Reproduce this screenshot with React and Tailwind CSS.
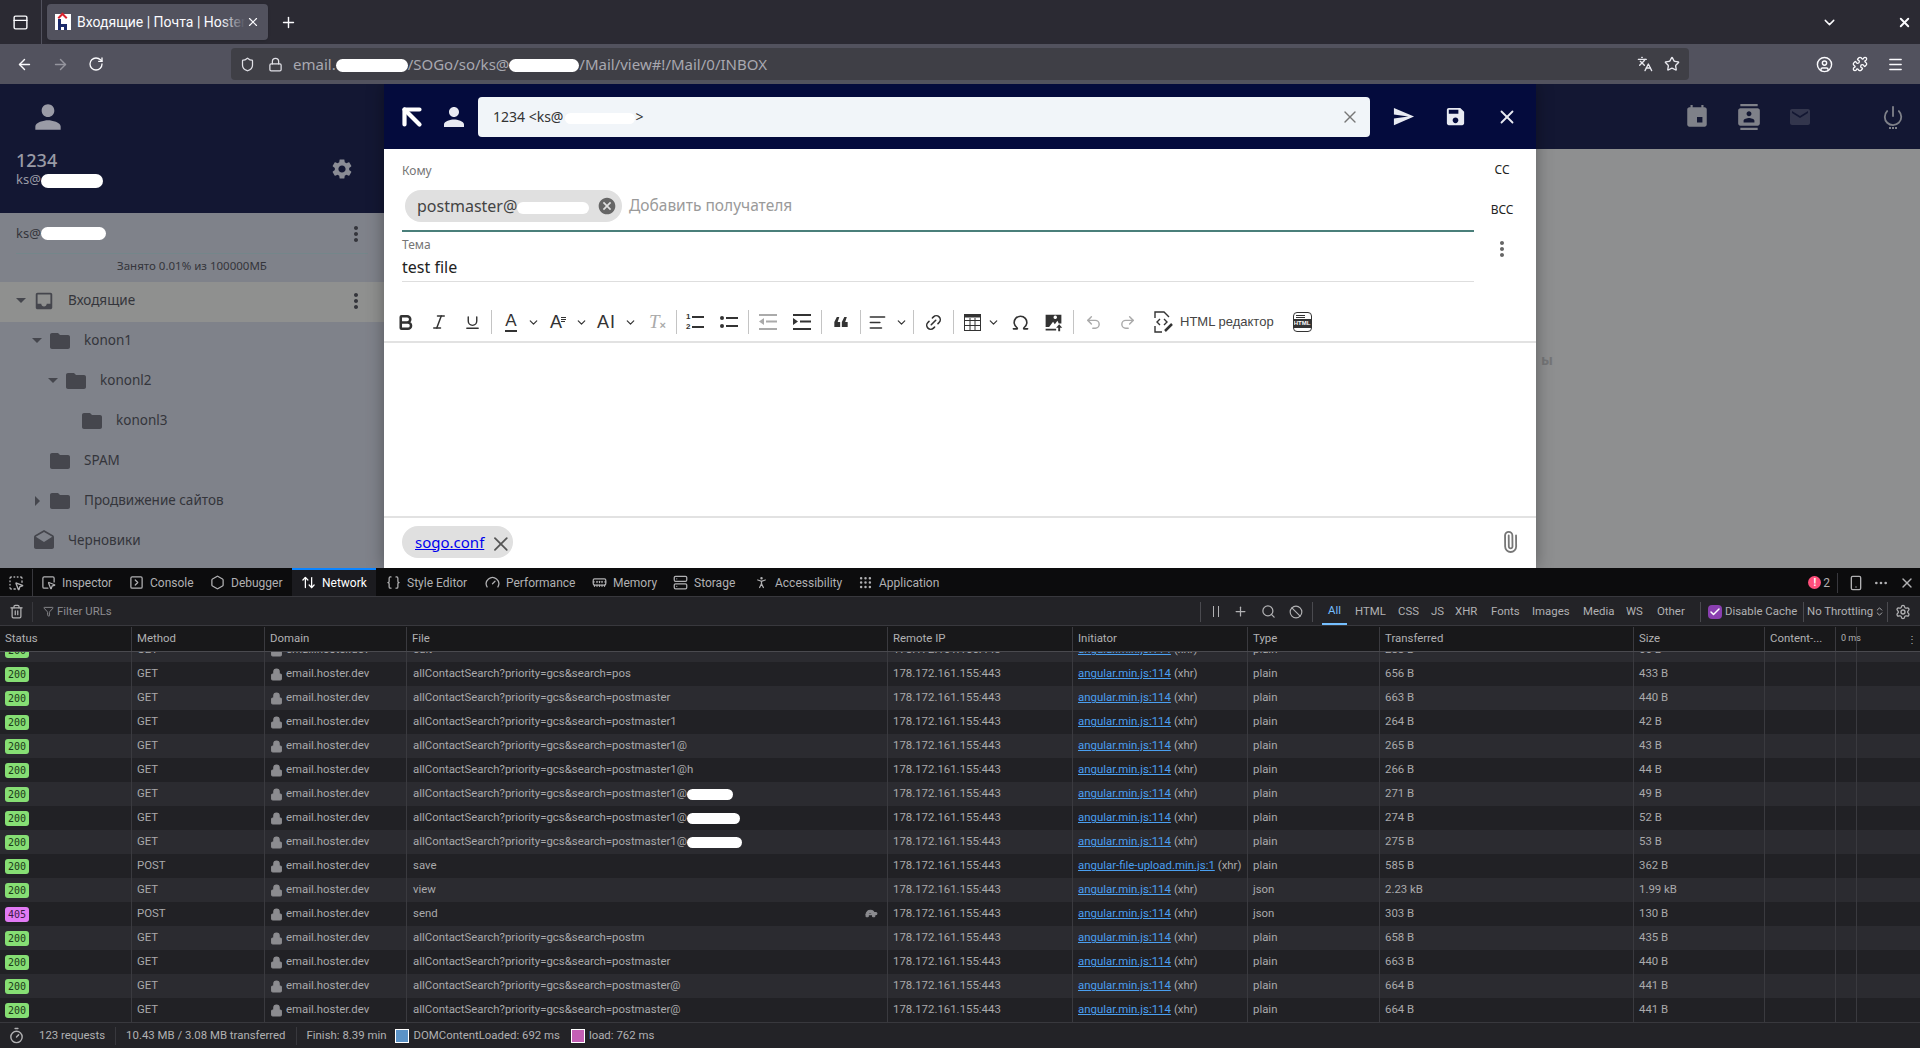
import {
  ArrowUpLeft, X, Plus, ChevronDown, ArrowLeft, ArrowRight, RotateCw, Shield, Lock, Languages, Star,
  CircleUser, Puzzle, Menu, Power, Paperclip, Bold, Italic, Underline, Link2,
  Omega, Undo2, Redo2, Search, Ban, Settings, Trash2, Filter, Timer, Check, AlignLeft,
  MousePointerSquareDashed, Inspect, SquareChevronRight, ArrowUpDown, Braces, Gauge, MemoryStick,
  Server, PersonStanding, Grip, Smartphone, Ellipsis, ChevronsUpDown, Turtle, PanelTop, Hexagon,
} from "lucide-react";

const ui = "font-['Noto_Sans','Liberation_Sans',sans-serif]";
const dt = "font-['Roboto','Liberation_Sans',sans-serif]";

const Md = ({ d, className = "", size = 24 }) => (
  <svg width={size} height={size} viewBox="0 0 24 24" fill="currentColor" className={`shrink-0 ${className}`}>
    <path d={d} />
  </svg>
);

const paths = {
  person: "M12 12c2.21 0 4-1.79 4-4s-1.79-4-4-4-4 1.79-4 4 1.79 4 4 4zm0 2c-2.67 0-8 1.34-8 4v2h16v-2c0-2.66-5.33-4-8-4z",
  send: "M2.01 21L23 12 2.01 3 2 10l15 2-15 2z",
  save: "M17 3H5c-1.11 0-2 .9-2 2v14c0 1.1.89 2 2 2h14c1.1 0 2-.9 2-2V7l-4-4zm-5 16c-1.66 0-3-1.34-3-3s1.34-3 3-3 3 1.34 3 3-1.34 3-3 3zm3-10H5V5h10v4z",
  gear: "M19.14 12.94c.04-.3.06-.61.06-.94 0-.32-.02-.64-.07-.94l2.03-1.58c.18-.14.23-.41.12-.61l-1.92-3.32c-.12-.22-.37-.29-.59-.22l-2.39.96c-.5-.38-1.03-.7-1.62-.94l-.36-2.54c-.04-.24-.24-.41-.48-.41h-3.84c-.24 0-.43.17-.47.41l-.36 2.54c-.59.24-1.13.57-1.62.94l-2.39-.96c-.22-.08-.47 0-.59.22L2.74 8.87c-.12.21-.08.47.12.61l2.03 1.58c-.05.3-.09.63-.09.94s.02.64.07.94l-2.03 1.58c-.18.14-.23.41-.12.61l1.92 3.32c.12.22.37.29.59.22l2.39-.96c.5.38 1.03.7 1.62.94l.36 2.54c.05.24.24.41.48.41h3.84c.24 0 .44-.17.47-.41l.36-2.54c.59-.24 1.13-.56 1.62-.94l2.39.96c.22.08.47 0 .59-.22l1.92-3.32c.12-.22.07-.47-.12-.61l-2.01-1.58zM12 15.6c-1.98 0-3.6-1.62-3.6-3.6s1.62-3.6 3.6-3.6 3.6 1.62 3.6 3.6-1.62 3.6-3.6 3.6z",
  contacts: "M20 0H4v2h16V0zM4 24h16v-2H4v2zM20 4H4c-1.1 0-2 .9-2 2v12c0 1.1.9 2 2 2h16c1.1 0 2-.9 2-2V6c0-1.1-.9-2-2-2zm-8 2.75c1.24 0 2.25 1.01 2.25 2.25s-1.01 2.25-2.25 2.25S9.75 10.24 9.75 9 10.76 6.75 12 6.75zM17 17H7v-1.5c0-1.67 3.33-2.5 5-2.5s5 .83 5 2.5V17z",
  mail: "M20 4H4c-1.1 0-1.99.9-1.99 2L2 18c0 1.1.9 2 2 2h16c1.1 0 2-.9 2-2V6c0-1.1-.9-2-2-2zm0 4l-8 5-8-5V6l8 5 8-5v2z",
  calendar: "M19 3h-1V1h-2v2H8V1H6v2H5C3.9 3 3 3.9 3 5v14c0 1.1.9 2 2 2h14c1.1 0 2-.9 2-2V5c0-1.1-.9-2-2-2zM17 12v5h-5v-5h5z",
  inbox: "M19 3H4.99c-1.11 0-1.98.89-1.98 2L3 19c0 1.1.88 2 1.99 2H19c1.1 0 2-.9 2-2V5c0-1.11-.9-2-2-2zm0 12h-4c0 1.66-1.35 3-3 3s-3-1.34-3-3H4.99V5H19v10z",
  folder: "M10 4H4c-1.1 0-1.99.9-1.99 2L2 18c0 1.1.9 2 2 2h16c1.1 0 2-.9 2-2V8c0-1.1-.9-2-2-2h-8l-2-2z",
  drafts: "M21.99 8c0-.72-.37-1.35-.94-1.7L12 1 2.95 6.3C2.38 6.65 2 7.28 2 8v10c0 1.1.9 2 2 2h16c1.1 0 2-.9 2-2l-.01-10zM12 13L3.74 7.84 12 3l8.26 4.84L12 13z",
  dots: "M12 8c1.1 0 2-.9 2-2s-.9-2-2-2-2 .9-2 2 .9 2 2 2zm0 2c-1.1 0-2 .9-2 2s.9 2 2 2 2-.9 2-2-.9-2-2-2zm0 6c-1.1 0-2 .9-2 2s.9 2 2 2 2-.9 2-2-.9-2-2-2z",
  cancel: "M12 2C6.47 2 2 6.47 2 12s4.47 10 10 10 10-4.47 10-10S17.53 2 12 2zm5 13.59L15.59 17 12 13.41 8.41 17 7 15.59 10.59 12 7 8.41 8.41 7 12 10.59 15.59 7 17 8.41 13.41 12 17 15.59z",
  quote: "M5 18l2-6H4V6h7v6l-3 6H5zm9 0l2-6h-3V6h7v6l-3 6h-3z",
  imageUp: "M3 3h18v10h-3l-1.5-3-3 4-2-3L7 17H3V3zm13 3a2 2 0 1 0 0 .01zM7 19h8v2H3v-2h4zm11.5-5l3.5 4h-2.4v4h-2.2v-4H15l3.5-4z",
};

const Blob = ({ className = "" }) => <span className={`inline-block rounded-full bg-white align-middle ${className}`} />;

function BrowserChrome() {
  return (
    <div className={`${ui} text-[#fbfbfe]`}>
      <div className="flex h-[44px] items-center bg-[#2b2a33]">
        <div className="flex h-full w-[42px] items-center justify-center border-r border-[#52525e]">
          <PanelTop size={17} />
        </div>
        <div className="relative ml-[5px] flex h-[36px] w-[221px] items-center rounded bg-[#52525e] pl-[8px] shadow">
          <div className="relative h-[16px] w-[16px] shrink-0 bg-white">
            <div className="absolute left-[3px] top-[5px] h-[11px] w-[3px] bg-[#1b2a6b]" />
            <div className="absolute bottom-0 left-[3px] h-[6px] w-[9px] border-t-[3px] border-r-[3px] border-[#1b2a6b]" />
            <div className="absolute left-[4px] top-0 h-[7px] w-[7px] rotate-45 border-l-2 border-t-2 border-[#d9232e]" />
          </div>
          <div className={`relative ml-[6px] w-[168px] overflow-hidden whitespace-nowrap text-[14px] ${dt}`}>
            Входящие | Почта | Hoster.dev
            <div className="absolute inset-y-0 right-0 w-[24px] bg-gradient-to-r from-transparent to-[#52525e]" />
          </div>
          <X size={14} className="ml-[1px] shrink-0" />
        </div>
        <Plus size={17} className="ml-[12px]" />
        <div className="flex-1" />
        <ChevronDown size={17} className="mr-[59px]" />
        <X size={15} strokeWidth={3} className="mr-[8px]" />
      </div>
      <div className="flex h-[40px] items-center bg-[#52525e]">
        <ArrowLeft size={17} className="ml-[16px]" />
        <ArrowRight size={17} className="ml-[19px] opacity-40" />
        <RotateCw size={16} className="ml-[19px]" />
        <div className="ml-[127px] flex h-[32px] w-[1458px] items-center rounded bg-[#3f3f46] text-[15px] text-[#a8a8b0]">
          <Shield size={15} className="ml-[9px] text-[#e0e0e6]" />
          <Lock size={15} className="ml-[13px] text-[#e0e0e6]" />
          <span className="ml-[10px] whitespace-nowrap">
            email.<Blob className="h-[13px] w-[72px]" />/SOGo/so/ks@<Blob className="h-[13px] w-[70px]" />/Mail/view#!/Mail/0/INBOX
          </span>
          <div className="flex-1" />
          <Languages size={16} className="mr-[11px] text-[#e8e8ee]" />
          <Star size={16} className="mr-[9px] text-[#e8e8ee]" />
        </div>
        <CircleUser size={17} className="ml-[127px]" />
        <Puzzle size={16} className="ml-[19px]" />
        <Menu size={17} className="ml-[19px]" />
      </div>
    </div>
  );
}

const folders = [
  { name: "konon1", tri: "down", pad: "pl-[30px]", icon: "folder" },
  { name: "kononl2", tri: "down", pad: "pl-[46px]", icon: "folder" },
  { name: "kononl3", pad: "pl-[62px]", icon: "folder" },
  { name: "SPAM", pad: "pl-[30px]", icon: "folder" },
  { name: "Продвижение сайтов", tri: "right", pad: "pl-[30px]", icon: "folder" },
  { name: "Черновики", pad: "pl-[14px]", icon: "drafts" },
];

const Tri = ({ dir }) => (
  <span className="flex w-[14px] shrink-0 items-center justify-center">
    {dir === "down" && <span className="h-0 w-0 border-x-[5px] border-t-[5px] border-x-transparent border-t-[#45464d]" />}
    {dir === "right" && <span className="h-0 w-0 border-y-[5px] border-l-[5px] border-y-transparent border-l-[#45464d]" />}
  </span>
);

function Sidebar() {
  return (
    <div className={`flex h-full w-[384px] shrink-0 flex-col overflow-hidden bg-[#7f828a] ${ui} text-[#34353b]`}>
      <div className="relative h-[129px] shrink-0 bg-[#131733] text-[#9a9ba6]">
        <Md d={paths.person} size={38} className="ml-[29px] mt-[14px]" />
        <div className="ml-[16px] mt-[12px] text-[18px] font-medium leading-[24px]">1234</div>
        <div className="ml-[16px] -mt-[1px] text-[13px] leading-[16px]">
          ks@<Blob className="h-[14px] w-[62px]" />
        </div>
        <Md d={paths.gear} size={24} className="absolute left-[330px] top-[73px] text-[#8a8c95]" />
      </div>
      <div className="h-[69px] shrink-0">
        <div className="flex h-[40px] items-center pl-[16px] pr-[16px] pt-[1px] text-[13px]">
          ks@<Blob className="h-[13px] w-[65px]" />
          <div className="flex-1" />
          <Md d={paths.dots} size={24} />
        </div>
        <div className="mx-[16px] h-[1px] bg-[#74868a]" />
        <div className="mt-[3px] text-center text-[11.5px] leading-[18px]">Занято 0.01% из 100000МБ</div>
      </div>
      <div className="flex h-[40px] shrink-0 items-center bg-[#8f908f] pb-[3px] pl-[14px] pr-[16px] text-[13.5px]">
        <Tri dir="down" />
        <Md d={paths.inbox} size={22} className="ml-[5px] text-[#45464d]" />
        <span className="ml-[13px]">Входящие</span>
        <div className="flex-1" />
        <Md d={paths.dots} size={24} />
      </div>
      {folders.map((f) => (
        <div key={f.name} className={`flex h-[40px] shrink-0 items-center pb-[3px] text-[13.5px] ${f.pad}`}>
          {f.icon === "folder" && <Tri dir={f.tri} />}
          <Md d={paths[f.icon]} size={24} className={`${f.icon === "folder" ? "ml-[4px]" : "ml-[18px]"} text-[#45464d]`} />
          <span className="ml-[12px]">{f.name}</span>
        </div>
      ))}
    </div>
  );
}

function RightPane() {
  return (
    <div className="relative h-full flex-1">
      <div className="flex h-[65px] items-center justify-end bg-[#131733] pr-[16px] text-[#7f8189]">
        <Md d={paths.calendar} size={26} />
        <Md d={paths.contacts} size={26} className="ml-[26px]" />
        <Md d={paths.mail} size={24} className="ml-[26px] text-[#33364d]" />
        <div className="ml-[70px] flex flex-col items-center">
          <Power size={22} className="text-[#7f8189]" />
          <span className="flex gap-px">
            <span className="h-[2px] w-[2px] bg-[#7f8189]" />
            <span className="h-[2px] w-[2px] bg-[#7f8189]" />
            <span className="h-[2px] w-[2px] bg-[#7f8189]" />
          </span>
        </div>
      </div>
      <div className="h-[419px] bg-[#8e8f90]" />
      <div className={`absolute left-[1157px] top-[265px] text-[14px] font-bold text-[#757678] ${ui}`}>ы</div>
    </div>
  );
}

const Sep = ({ className = "" }) => (
  <div className={`flex h-full shrink-0 items-center justify-center ${className}`}>
    <div className="h-[24px] w-px shrink-0 bg-[#c4c4c4]" />
  </div>
);

const Cell = ({ className = "", children }) => (
  <div className={`flex h-full shrink-0 items-center justify-center text-[#333] ${className}`}>{children}</div>
);

const Chev = () => <ChevronDown size={13} strokeWidth={2.2} className="shrink-0" />;

const NumList = () => (
  <div className="flex w-[18px] flex-col gap-[2px] text-[8px] font-bold leading-[8px]">
    <div className="flex items-center gap-[2px]">1<span className="h-[2px] flex-1 bg-[#333]" /></div>
    <div className="flex items-center gap-[2px]">2<span className="h-[2px] flex-1 bg-[#333]" /></div>
  </div>
);

const DotList = () => (
  <svg width="18" height="14" viewBox="0 0 18 14" fill="currentColor">
    <circle cx="2" cy="3" r="2" /><circle cx="2" cy="11" r="2" />
    <path d="M6 2h12v2H6zM6 10h12v2H6z" />
  </svg>
);

function EditorToolbar() {
  return (
    <div className="flex h-[62px] shrink-0 items-center border-b-2 border-[#e2e2e2] pl-[4px] pt-[22px] font-['Liberation_Sans',sans-serif]">
      <Cell className="w-[34px]"><Bold size={19} strokeWidth={3.2} /></Cell>
      <Cell className="w-[34px]"><Italic size={18} /></Cell>
      <Cell className="w-[32px]"><Underline size={17} /></Cell>
      <Sep className="w-[6px]" />
      <Cell className="w-[34px]">
        <span className="border-b-2 border-[#333] text-[17px] leading-[18px]">A</span>
      </Cell>
      <Cell className="w-[10px]"><Chev /></Cell>
      <Cell className="w-[40px]">
        <span className="text-[18px]">A</span>
        <span className="-ml-px mb-[6px] flex flex-col gap-px">
          <span className="h-px w-[5px] bg-[#333]" />
          <span className="h-px w-[5px] bg-[#333]" />
          <span className="h-px w-[4px] bg-[#333]" />
        </span>
      </Cell>
      <Cell className="w-[6px]"><Chev /></Cell>
      <Cell className="w-[44px]">
        <span className="text-[18px]">A</span>
        <span className="ml-[1px] text-[18px] font-light leading-none">I</span>
      </Cell>
      <Cell className="w-[4px]"><Chev /></Cell>
      <Cell className="ml-[8px] w-[35px] text-[#999]">
        <span className="font-['Liberation_Serif',serif] text-[19px] italic text-[#aaa]">T</span>
        <span className="mt-[6px] text-[11px] font-bold text-[#aaa]">×</span>
      </Cell>
      <Sep className="w-[2px]" />
      <Cell className="w-[36px]"><NumList /></Cell>
      <Cell className="w-[32px]"><DotList /></Cell>
      <Sep className="w-[6px]" />
      <Cell className="w-[34px] text-[#aaa]">
        <svg width="18" height="16" viewBox="0 0 18 16" fill="currentColor"><path d="M0 0h18v2H0zM7 6.500h11v2H7zM0 14h18v2H0zM0 7.500l5-3.500v7z" /></svg>
      </Cell>
      <Cell className="w-[34px]">
        <svg width="18" height="16" viewBox="0 0 18 16" fill="currentColor"><path d="M0 0h18v2H0zM7 6.500h11v2H7zM0 14h18v2H0zM5 7.500L0 4v7z" /></svg>
      </Cell>
      <Sep className="w-[4px]" />
      <Cell className="w-[36px]"><Md d={paths.quote} size={20} className="rotate-180" /></Cell>
      <Sep className="w-[2px]" />
      <Cell className="w-[32px]"><AlignLeft size={19} /></Cell>
      <Cell className="w-[16px]"><Chev /></Cell>
      <Sep className="w-[8px]" />
      <Cell className="w-[32px]"><Link2 size={19} className="-rotate-45" /></Cell>
      <Sep className="w-[8px]" />
      <Cell className="w-[30px]">
        <svg width="17" height="17" viewBox="0 0 17 17" fill="none" stroke="currentColor"><rect x=".5" y=".5" width="16" height="16" /><path d="M.5 6.500h16M.5 11.500h16M6 4v13M11 4v13" /><path d="M0 2h17" strokeWidth="3" /></svg>
      </Cell>
      <Cell className="w-[12px]"><Chev /></Cell>
      <Cell className="w-[42px]"><Omega size={19} /></Cell>
      <Cell className="w-[24px]"><Md d={paths.imageUp} size={21} /></Cell>
      <Sep className="w-[16px]" />
      <Cell className="w-[24px] text-[#aaa]"><Undo2 size={17} /></Cell>
      <Cell className="w-[44px] text-[#aaa]"><Redo2 size={17} /></Cell>
      <Cell className="w-[28px]">
        <svg width="20" height="22" viewBox="0 0 20 22" fill="none" stroke="currentColor" strokeWidth="1.400"><path d="M2 7V1h9l5 5M2 15v6h7" /><path d="M7 8l-3 3 3 3M11 8l3 3-3 3" /><path d="M12 20l7-7" strokeWidth="2.500" /></svg>
      </Cell>
      <span className="ml-[3px] w-[93px] shrink-0 whitespace-nowrap text-[13px] text-[#444]">HTML редактор</span>
      <Cell className="ml-[14px] w-[30px]">
        <div className="flex h-[20px] w-[19px] flex-col items-center overflow-hidden rounded-sm border border-[#333] pt-[2px]">
          <span className="mb-px ml-[-4px] h-px w-[9px] bg-[#333]" />
          <span className="mb-[1px] ml-[-4px] h-px w-[9px] bg-[#333]" />
          <span className="w-[21px] bg-[#333] text-center text-[6px] font-bold leading-[9px] text-white">HTML</span>
        </div>
      </Cell>
    </div>
  );
}

function ComposeDialog() {
  return (
    <div className={`absolute left-[384px] top-0 flex h-[484px] w-[1152px] flex-col bg-white shadow-[0_0_16px_rgba(0,0,0,0.35)] ${ui}`}>
      <div className="flex h-[65px] shrink-0 items-center bg-[#040b3d] text-[#e8eaf2]">
        <ArrowUpLeft size={36} strokeWidth={2.8} className="ml-[10px] text-white" />
        <Md d={paths.person} size={30} className="ml-[9px]" />
        <div className="ml-[9px] flex h-[40px] w-[892px] items-center rounded-sm bg-[#f1f5f9] pl-[15px] pr-[10px] text-[14px] text-[#333]">
          <span className="whitespace-nowrap">1234 &lt;ks@<Blob className="ml-[2px] h-[11px] w-[70px]" />&gt;</span>
          <div className="flex-1" />
          <X size={20} strokeWidth={1.600} className="text-[#777]" />
        </div>
        <Md d={paths.send} size={23} className="ml-[22px]" />
        <Md d={paths.save} size={23} className="ml-[29px]" />
        <X size={22} strokeWidth={2} className="ml-[29px]" />
      </div>
      <div className="flex h-[132px] shrink-0">
        <div className="ml-[18px] w-[1072px]">
          <div className="mt-[13px] text-[12px] leading-[17px] text-[#757575]">Кому</div>
          <div className="mt-[11px] flex h-[32px] items-center pl-[3px]">
            <div className="flex h-[32px] w-[217px] items-center rounded-full bg-[#e0e0e0] pl-[12px] text-[16px] text-[#444]">
              <span className="whitespace-nowrap">postmaster@<Blob className="h-[12px] w-[72px]" /></span>
              <div className="flex-1" />
              <Md d={paths.cancel} size={20} className="mr-[5px] text-[#666]" />
            </div>
            <span className="ml-[7px] text-[15.5px] text-[#9a9a9a]">Добавить получателя</span>
          </div>
          <div className="mt-[8px] h-[2px] bg-[#4a7f7a]" />
          <div className="mt-[4px] text-[12px] leading-[17px] text-[#757575]">Тема</div>
          <div className="h-[27px] pt-[2px] text-[16px] leading-[24px] text-[#222]">test file</div>
          <div className="mt-[1px] h-px bg-[#dedede]" />
        </div>
        <div className="flex flex-1 flex-col items-center pr-[6px] text-[12px] text-[#222]">
          <div className="mt-[12px] leading-[18px]">CC</div>
          <div className="mt-[22px] leading-[18px]">BCC</div>
          <Md d={paths.dots} size={24} className="mt-[18px] text-[#666]" />
        </div>
      </div>
      <EditorToolbar />
      <div className="flex-1" />
      <div className="flex h-[52px] shrink-0 items-center border-t-2 border-[#e2e2e2] pb-[2px] pl-[18px] pr-[15px]">
        <div className="flex h-[32px] w-[111px] items-center rounded-full bg-[#e0e0e0] pl-[13px] text-[15px]">
          <span className="text-[#0000ee] underline">sogo.conf</span>
          <X size={24} strokeWidth={1.800} className="ml-[5px] mt-[4px] text-[#555]" />
        </div>
        <div className="flex-1" />
        <Paperclip size={22} className="rotate-[-45deg] text-[#777]" />
      </div>
    </div>
  );
}

const dtTabs = [
  { label: "Inspector", icon: Inspect, w: "w-[88px]" },
  { label: "Console", icon: SquareChevronRight, w: "w-[81px]" },
  { label: "Debugger", icon: Hexagon, w: "w-[82px]" },
  { label: "Network", icon: ArrowUpDown, w: "mr-[10px] w-[84px]", active: true },
  { label: "Style Editor", icon: Braces, w: "w-[99px]" },
  { label: "Performance", icon: Gauge, w: "w-[107px]" },
  { label: "Memory", icon: MemoryStick, w: "w-[81px]" },
  { label: "Storage", icon: Server, w: "w-[81px]" },
  { label: "Accessibility", icon: PersonStanding, w: "w-[104px]" },
  { label: "Application", icon: Grip, w: "w-[90px]" },
];

const filters = [
  { t: "HTML", w: "w-[43px]" },
  { t: "CSS", w: "w-[33px]" },
  { t: "JS", w: "w-[24px]" },
  { t: "XHR", w: "w-[36px]" },
  { t: "Fonts", w: "w-[41px]" },
  { t: "Images", w: "w-[51px]" },
  { t: "Media", w: "w-[43px]" },
  { t: "WS", w: "w-[31px]" },
  { t: "Other", w: "w-[43px]" },
];

const colW = ["w-[132px]", "w-[133px]", "w-[142px]", "w-[481px]", "w-[185px]", "w-[175px]", "w-[132px]", "w-[254px]", "w-[131px]", "w-[71px]"];
const headers = ["Status", "Method", "Domain", "File", "Remote IP", "Initiator", "Type", "Transferred", "Size", "Content-..."];

const S = "allContactSearch?priority=gcs&search=";
const rows = [
  { file: S + "pos", tr: "656 B", size: "433 B" },
  { file: S + "postmaster", tr: "663 B", size: "440 B" },
  { file: S + "postmaster1", tr: "264 B", size: "42 B" },
  { file: S + "postmaster1@", tr: "265 B", size: "43 B" },
  { file: S + "postmaster1@h", tr: "266 B", size: "44 B" },
  { file: S + "postmaster1@", blob: "w-[46px]", tr: "271 B", size: "49 B" },
  { file: S + "postmaster1@", blob: "w-[53px]", tr: "274 B", size: "52 B" },
  { file: S + "postmaster1@", blob: "w-[55px]", tr: "275 B", size: "53 B" },
  { file: "save", method: "POST", init: "angular-file-upload.min.js:1", tr: "585 B", size: "362 B" },
  { file: "view", type: "json", tr: "2.23 kB", size: "1.99 kB" },
  { file: "send", method: "POST", status: 405, type: "json", tr: "303 B", size: "130 B", slow: true },
  { file: S + "postm", tr: "658 B", size: "435 B" },
  { file: S + "postmaster", tr: "663 B", size: "440 B" },
  { file: S + "postmaster@", tr: "664 B", size: "441 B" },
  { file: S + "postmaster@", tr: "664 B", size: "441 B" },
];

const Col = ({ i, children, className = "" }) => (
  <div className={`relative flex h-full shrink-0 items-center overflow-hidden whitespace-nowrap border-r border-[#3a3a3f] pl-[5px] ${colW[i]} ${className}`}>
    {children}
  </div>
);

function Row({ r, odd, className = "" }) {
  const status = r.status || 200;
  return (
    <div className={`flex h-[24px] shrink-0 items-center text-[11.4px] text-[#a9a9ab] ${odd ? "bg-[#2b2b30]" : "bg-[#212125]"} ${className}`}>
      <Col i={0}>
        <span className={`w-[24px] rounded-[3px] text-center font-['DejaVu_Sans_Mono',monospace] text-[10px] leading-[15px] text-[#1b3a17] ${status === 405 ? "bg-[#e27af5] text-[#3b1a45]" : "bg-[#86de74]"}`}>{status}</span>
      </Col>
      <Col i={1}>{r.method || "GET"}</Col>
      <Col i={2}>
        <Lock size={13} fill="currentColor" className="mr-[3px] shrink-0 text-[#8c8c90]" />
        email.hoster.dev
      </Col>
      <Col i={3} className="pl-[6px]">
        {r.file}
        {r.blob && <Blob className={`h-[11px] ${r.blob}`} />}
        {r.slow && <Turtle size={13} fill="currentColor" className="absolute right-[9px] top-[5px] text-[#8c8c90]" />}
      </Col>
      <Col i={4}>178.172.161.155:443</Col>
      <Col i={5}>
        <span className="text-[#4a9ff0] underline">{r.init || "angular.min.js:114"}</span>
        <span className="ml-[3px]">(xhr)</span>
      </Col>
      <Col i={6}>{r.type || "plain"}</Col>
      <Col i={7}>{r.tr}</Col>
      <Col i={8}>{r.size}</Col>
      <Col i={9} />
      <div className="h-full w-[21px] shrink-0 border-r border-[#3a3a3f]" />
    </div>
  );
}

function DevTools() {
  return (
    <div className={`flex h-[480px] shrink-0 flex-col bg-[#232327] text-[11.4px] text-[#b1b1b3] ${dt}`}>
      <div className="flex h-[29px] shrink-0 items-center border-b border-[#38383d] bg-[#0c0c0d] pt-px text-[12px]">
        <div className="flex h-full w-[33px] shrink-0 items-center justify-center border-r border-[#38383d]">
          <MousePointerSquareDashed size={16} />
        </div>
        <div className="w-[8px] shrink-0" />
        {dtTabs.map((t) => (
          <div key={t.label} className={`relative flex h-full shrink-0 items-center whitespace-nowrap ${t.w} ${t.active ? "bg-[#1b1b1f] text-white" : ""}`}>
            {t.active && <div className="absolute inset-x-0 top-[-1px] h-[2px] bg-[#0a84ff]" />}
            <t.icon size={15} className={`mr-[6px] shrink-0 ${t.active ? "ml-[9px]" : ""}`} />
            {t.label}
          </div>
        ))}
        <div className="flex-1" />
        <span className="flex h-[13px] w-[13px] items-center justify-center rounded-full bg-[#ff4f7b] text-[10px] font-bold leading-none text-white">!</span>
        <span className="ml-[2px] mr-[7px]">2</span>
        <div className="h-[20px] w-px bg-[#38383d]" />
        <Smartphone size={16} className="ml-[10px]" />
        <Ellipsis size={16} className="ml-[9px]" />
        <X size={16} className="ml-[10px] mr-[5px]" />
      </div>
      <div className="flex h-[29px] shrink-0 items-center border-b border-[#38383d] pt-px">
        <Trash2 size={15} className="ml-[9px]" />
        <div className="ml-[8px] h-[20px] w-px bg-[#38383d]" />
        <Filter size={11} className="ml-[10px] text-[#8c8c90]" />
        <span className="ml-[3px] text-[#8c8c90]">Filter URLs</span>
        <div className="flex-1" />
        <div className="h-[20px] w-px bg-[#4a4a4f]" />
        <span className="ml-[12px] h-[11px] w-px bg-[#b1b1b3]" />
        <span className="ml-[4px] h-[11px] w-px bg-[#b1b1b3]" />
        <Plus size={15} className="ml-[14px]" />
        <Search size={15} className="ml-[13px]" />
        <Ban size={14} className="ml-[13px]" />
        <div className="ml-[9px] h-[20px] w-px bg-[#4a4a4f]" />
        <div className="ml-[9px] flex h-full w-[25px] items-center justify-center border-b-2 border-[#75bfff] text-[#75bfff]">All</div>
        <div className="w-[8px]" />
        {filters.map((f) => (
          <span key={f.t} className={`whitespace-nowrap ${f.w}`}>{f.t}</span>
        ))}
        <div className="h-[20px] w-px bg-[#4a4a4f]" />
        <span className="ml-[7px] flex h-[14px] w-[14px] items-center justify-center rounded-sm bg-[#8a3fb0]">
          <Check size={12} strokeWidth={3} className="text-white" />
        </span>
        <span className="ml-[3px] w-[78px] whitespace-nowrap">Disable Cache</span>
        <div className="h-[20px] w-px bg-[#4a4a4f]" />
        <span className="ml-[3px] w-[66px] whitespace-nowrap">No Throttling</span>
        <ChevronsUpDown size={11} className="ml-[1px]" />
        <div className="ml-[2px] h-[20px] w-px bg-[#4a4a4f]" />
        <Settings size={16} className="ml-[7px] mr-[9px]" />
      </div>
      <div className="flex h-[26px] shrink-0 items-center border-b border-[#4a4a4f] bg-[#18181a] pt-px">
        {headers.map((h, i) => (
          <Col key={h} i={i}>{h}</Col>
        ))}
        <div className="flex h-full w-[21px] shrink-0 items-center whitespace-nowrap border-r border-[#3a3a3f] pl-[5px] text-[9px]">0 ms</div>
        <div className="flex-1" />
        <span className="mr-[3px] text-[10px]">⋮</span>
      </div>
      <div className="h-[370px] shrink-0 overflow-hidden">
        <div className="h-[10px] overflow-hidden">
          <Row odd r={{ file: "edit", tr: "288 B", size: "66 B" }} className="-mt-[14px]" />
        </div>
        {rows.map((r, i) => (
          <Row key={i} r={r} odd={i % 2 === 1} />
        ))}
      </div>
      <div className="flex h-[26px] flex-1 items-center border-t border-[#38383d] bg-[#232327]">
        <Timer size={17} className="ml-[8px]" />
        <span className="ml-[14px]">123 requests</span>
        <div className="ml-[10px] h-[18px] w-px bg-[#38383d]" />
        <span className="ml-[10px]">10.43 MB / 3.08 MB transferred</span>
        <div className="ml-[10px] h-[18px] w-px bg-[#38383d]" />
        <span className="ml-[10px]">Finish: 8.39 min</span>
        <span className="ml-[9px] h-[14px] w-[14px] border border-white bg-[#5b93c7]" />
        <span className="ml-[4px]">DOMContentLoaded: 692 ms</span>
        <span className="ml-[11px] h-[14px] w-[14px] border border-white bg-[#c45fb5]" />
        <span className="ml-[4px]">load: 762 ms</span>
      </div>
    </div>
  );
}

export default function App() {
  return (
    <div className="flex h-[1048px] w-[1920px] flex-col overflow-hidden bg-[#0c0c0d]">
      <BrowserChrome />
      <div className="relative flex h-[484px] shrink-0 overflow-hidden">
        <Sidebar />
        <RightPane />
        <ComposeDialog />
      </div>
      <DevTools />
    </div>
  );
}
